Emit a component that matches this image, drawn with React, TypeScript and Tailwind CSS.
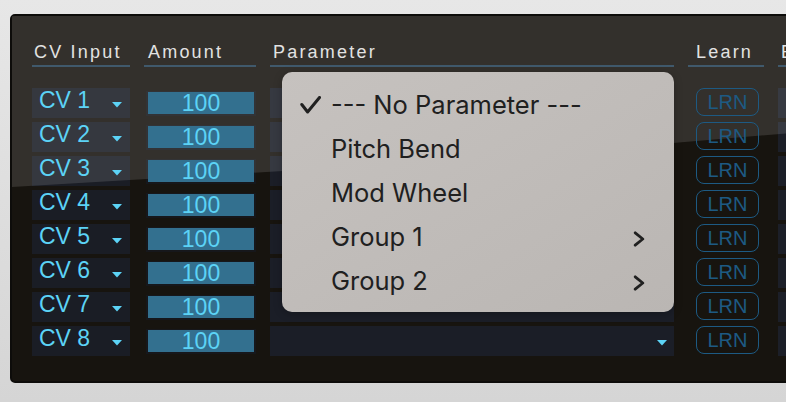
import React from "react";

const ROWS = [1, 2, 3, 4, 5, 6, 7, 8];

const MENU_ITEMS = [
  { label: "--- No Parameter ---", checked: true, sub: false },
  { label: "Pitch Bend", checked: false, sub: false },
  { label: "Mod Wheel", checked: false, sub: false },
  { label: "Group 1", checked: false, sub: true },
  { label: "Group 2", checked: false, sub: true },
];

function Caret({ className }: { className?: string }) {
  return (
    <svg width="10" height="6" viewBox="0 0 10 6" className={className}>
      <polygon points="0,0 10,0 5,5.5" fill="#5cd3f6" />
    </svg>
  );
}

function Row({ n }: { n: number }) {
  return (
    <div className="flex h-[30px] gap-[14px]">
      {/* CV input select */}
      <div className="flex w-[98px] shrink-0 bg-[#1a1d25] pl-[7px]">
        <span className="relative z-20 text-[23px] leading-[24px] text-[#5cd3f6]">CV {n}</span>
        <Caret className="relative z-20 ml-auto mr-[8px] mt-[14px]" />
      </div>

      {/* Amount */}
      <div className="w-[112px] shrink-0 pl-[2px] pt-[3px]">
        <div className="h-[25px] w-[110px] bg-[#16171b] px-[2px] pb-[2px] pt-[1px]">
          <div className="relative z-20 flex h-full items-center justify-center bg-[#33708f] text-[23px] leading-[22px] text-[#5cd3f6]">
            100
          </div>
        </div>
      </div>

      {/* Parameter select */}
      <div className="flex w-[404px] shrink-0 bg-[#1b1e27]">
        <Caret className="relative z-20 ml-auto mr-[7px] mt-[14px]" />
      </div>

      {/* Learn */}
      <div className="w-[76px] shrink-0 pl-[8px]">
        <div className="relative z-20 flex h-[28px] w-[63px] items-center justify-center rounded-[8px] border-[1.5px] border-[#1d5a83] text-[20px] leading-none text-[#1d5a83]">
          LRN
        </div>
      </div>

      {/* next column, cut off at the window edge */}
      <div className="w-[100px] shrink-0 bg-[#1c1f28]" />
    </div>
  );
}

function ParameterMenu() {
  return (
    <div className="absolute left-[270px] top-[56px] z-30 flex h-[240px] w-[392px] flex-col rounded-[10px] bg-gradient-to-br from-[#c6c2bf] to-[#bab6b3] pb-[9px] pt-[11px] font-['Inter',sans-serif] text-[25.5px] text-[#202020] shadow-[0_2px_8px_rgba(0,0,0,0.25)]">
      {MENU_ITEMS.map((item) => (
        <div key={item.label} className="flex h-[44px] items-center pr-[29px]">
          <div className="flex w-[49px] shrink-0 items-center pl-[18px]">
            {item.checked && (
              <svg width="21" height="18" viewBox="0 0 21 18">
                <path
                  d="M1.8 8.5 L7.6 16 L19.5 1.5"
                  fill="none"
                  stroke="#202020"
                  strokeWidth="3"
                  strokeLinecap="round"
                  strokeLinejoin="round"
                />
              </svg>
            )}
          </div>
          <span>{item.label}</span>
          {item.sub && (
            <svg width="12" height="16" viewBox="0 0 12 16" className="ml-auto mt-[4px]">
              <path
                d="M2.2 1.8 L9.8 8 L2.2 14.2"
                fill="none"
                stroke="#202020"
                strokeWidth="2.8"
                strokeLinecap="round"
                strokeLinejoin="round"
              />
            </svg>
          )}
        </div>
      ))}
    </div>
  );
}

export default function App() {
  return (
    <div className="h-[402px] w-[786px] overflow-hidden bg-gradient-to-b from-[#e7e7e7] to-[#d5d5d5] pt-[14px] font-['Liberation_Sans',Arial,sans-serif]">
      <div className="relative ml-[10px] h-[369px] w-[820px] rounded-[5px] border-2 border-[#0d0c0a] bg-[#17140f] pl-[20px] pt-[26px]">
        {/* glossy sheen over the upper part */}
        <div className="pointer-events-none absolute inset-0 z-10 bg-white/[0.12] [clip-path:polygon(0_0,100%_0,100%_114px,661px_127px,288px_154px,0_171px)]" />

        {/* Column headers */}
        <div className="relative z-20 flex gap-[14px] text-[18px] leading-[20px] tracking-[2.2px] text-[#e2e2e2]">
          <div className="w-[98px] shrink-0 border-b-2 border-[#40596c] pb-[3px] pl-[2px]">CV Input</div>
          <div className="w-[112px] shrink-0 border-b-2 border-[#40596c] pb-[3px] pl-[4px]">Amount</div>
          <div className="w-[404px] shrink-0 border-b-2 border-[#40596c] pb-[3px] pl-[3px]">Parameter</div>
          <div className="w-[76px] shrink-0 border-b-2 border-[#40596c] pb-[3px] pl-[8px]">Learn</div>
          <div className="w-[100px] shrink-0 border-b-2 border-[#40596c] pb-[3px] pl-[3px]">Bipolar</div>
        </div>

        {/* CV rows */}
        <div className="mt-[21px] flex flex-col gap-[4px]">
          {ROWS.map((n) => (
            <Row key={n} n={n} />
          ))}
        </div>

        <ParameterMenu />
      </div>
    </div>
  );
}
